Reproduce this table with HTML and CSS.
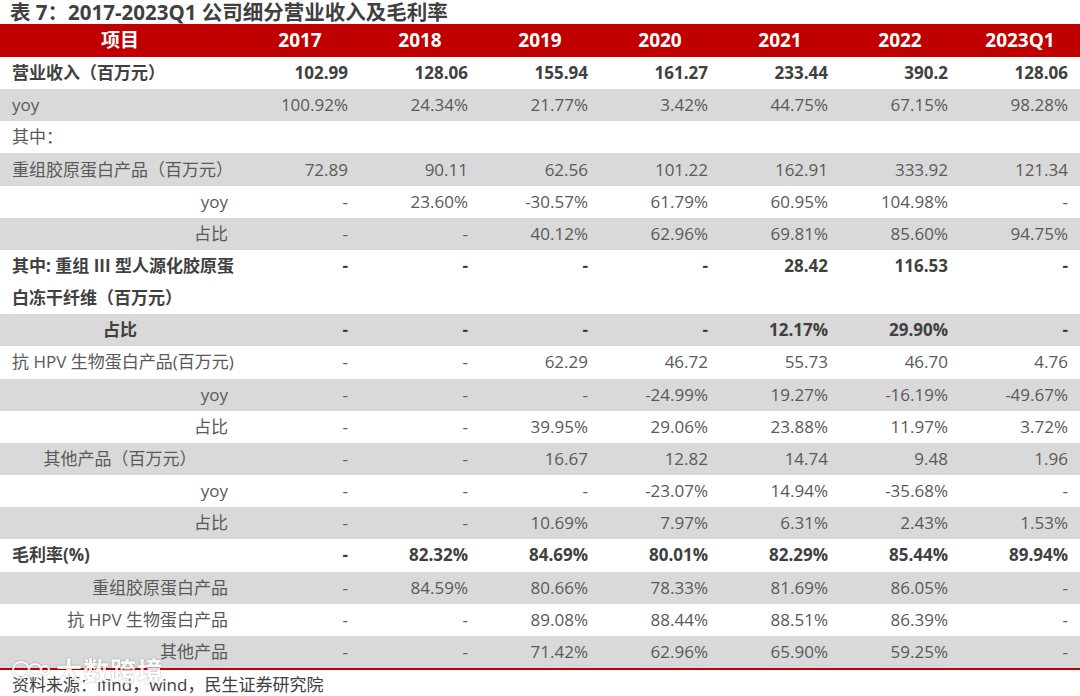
FILE: index.html
```html
<!DOCTYPE html>
<html lang="zh-CN">
<head>
<meta charset="utf-8">
<title>表 7</title>
<link rel="stylesheet" href="styles.css">
</head>
<body>
<div class="page">
  <div class="title">表 7：2017-2023Q1 公司细分营业收入及毛利率</div>
  <div class="t">
    <div class="row head"><div class="cell c">项目</div><div class="cell">2017</div><div class="cell">2018</div><div class="cell">2019</div><div class="cell">2020</div><div class="cell">2021</div><div class="cell">2022</div><div class="cell">2023Q1</div></div>
    <div class="row w b"><div class="cell l">营业收入（百万元）</div><div class="cell">102.99</div><div class="cell">128.06</div><div class="cell">155.94</div><div class="cell">161.27</div><div class="cell">233.44</div><div class="cell">390.2</div><div class="cell">128.06</div></div>
    <div class="row g"><div class="cell l">yoy</div><div class="cell">100.92%</div><div class="cell">24.34%</div><div class="cell">21.77%</div><div class="cell">3.42%</div><div class="cell">44.75%</div><div class="cell">67.15%</div><div class="cell">98.28%</div></div>
    <div class="row w"><div class="cell l">其中：</div><div class="cell"></div><div class="cell"></div><div class="cell"></div><div class="cell"></div><div class="cell"></div><div class="cell"></div><div class="cell"></div></div>
    <div class="row g"><div class="cell l">重组胶原蛋白产品（百万元）</div><div class="cell">72.89</div><div class="cell">90.11</div><div class="cell">62.56</div><div class="cell">101.22</div><div class="cell">162.91</div><div class="cell">333.92</div><div class="cell">121.34</div></div>
    <div class="row w"><div class="cell r">yoy</div><div class="cell">-</div><div class="cell">23.60%</div><div class="cell">-30.57%</div><div class="cell">61.79%</div><div class="cell">60.95%</div><div class="cell">104.98%</div><div class="cell">-</div></div>
    <div class="row g"><div class="cell r">占比</div><div class="cell">-</div><div class="cell">-</div><div class="cell">40.12%</div><div class="cell">62.96%</div><div class="cell">69.81%</div><div class="cell">85.60%</div><div class="cell">94.75%</div></div>
    <div class="row w b"><div class="cell l">其中: 重组 III 型人源化胶原蛋</div><div class="cell">-</div><div class="cell">-</div><div class="cell">-</div><div class="cell">-</div><div class="cell">28.42</div><div class="cell">116.53</div><div class="cell">-</div></div>
    <div class="row w b"><div class="cell l">白冻干纤维（百万元）</div><div class="cell"></div><div class="cell"></div><div class="cell"></div><div class="cell"></div><div class="cell"></div><div class="cell"></div><div class="cell"></div></div>
    <div class="row g b"><div class="cell c">占比</div><div class="cell">-</div><div class="cell">-</div><div class="cell">-</div><div class="cell">-</div><div class="cell">12.17%</div><div class="cell">29.90%</div><div class="cell">-</div></div>
    <div class="row w"><div class="cell l">抗 HPV 生物蛋白产品(百万元)</div><div class="cell">-</div><div class="cell">-</div><div class="cell">62.29</div><div class="cell">46.72</div><div class="cell">55.73</div><div class="cell">46.70</div><div class="cell">4.76</div></div>
    <div class="row g"><div class="cell r">yoy</div><div class="cell">-</div><div class="cell">-</div><div class="cell">-</div><div class="cell">-24.99%</div><div class="cell">19.27%</div><div class="cell">-16.19%</div><div class="cell">-49.67%</div></div>
    <div class="row w"><div class="cell r">占比</div><div class="cell">-</div><div class="cell">-</div><div class="cell">39.95%</div><div class="cell">29.06%</div><div class="cell">23.88%</div><div class="cell">11.97%</div><div class="cell">3.72%</div></div>
    <div class="row g"><div class="cell c">其他产品（百万元）</div><div class="cell">-</div><div class="cell">-</div><div class="cell">16.67</div><div class="cell">12.82</div><div class="cell">14.74</div><div class="cell">9.48</div><div class="cell">1.96</div></div>
    <div class="row w"><div class="cell r">yoy</div><div class="cell">-</div><div class="cell">-</div><div class="cell">-</div><div class="cell">-23.07%</div><div class="cell">14.94%</div><div class="cell">-35.68%</div><div class="cell">-</div></div>
    <div class="row g"><div class="cell r">占比</div><div class="cell">-</div><div class="cell">-</div><div class="cell">10.69%</div><div class="cell">7.97%</div><div class="cell">6.31%</div><div class="cell">2.43%</div><div class="cell">1.53%</div></div>
    <div class="row w b"><div class="cell l">毛利率(%)</div><div class="cell">-</div><div class="cell">82.32%</div><div class="cell">84.69%</div><div class="cell">80.01%</div><div class="cell">82.29%</div><div class="cell">85.44%</div><div class="cell">89.94%</div></div>
    <div class="row g"><div class="cell r">重组胶原蛋白产品</div><div class="cell">-</div><div class="cell">84.59%</div><div class="cell">80.66%</div><div class="cell">78.33%</div><div class="cell">81.69%</div><div class="cell">86.05%</div><div class="cell">-</div></div>
    <div class="row w"><div class="cell r">抗 HPV 生物蛋白产品</div><div class="cell">-</div><div class="cell">-</div><div class="cell">89.08%</div><div class="cell">88.44%</div><div class="cell">88.51%</div><div class="cell">86.39%</div><div class="cell">-</div></div>
    <div class="row g"><div class="cell r">其他产品</div><div class="cell">-</div><div class="cell">-</div><div class="cell">71.42%</div><div class="cell">62.96%</div><div class="cell">65.90%</div><div class="cell">59.25%</div><div class="cell">-</div></div>
  </div>
  <div class="source">资料来源：ifind，wind，民生证券研究院</div>
  <div class="wm">
    <svg class="wm-logo" width="40" height="22" viewBox="0 0 40 22">
      <circle cx="11" cy="11" r="8" fill="none" stroke="#fff" stroke-width="2.2"/>
      <circle cx="25" cy="11" r="6" fill="none" stroke="#fff" stroke-width="2.2"/>
      <circle cx="35" cy="11" r="4" fill="none" stroke="#fff" stroke-width="2.2"/>
    </svg>
    <span class="wm-text">大数跨境</span>
  </div>
</div>
</body>
</html>
```

FILE: styles.css
```css
* { box-sizing: border-box; }
body {
  margin: 0;
  background: #ffffff;
  font-family: "Open Sans", "Noto Sans CJK SC", sans-serif;
  color: #595959;
}
.page {
  position: relative;
  width: 1080px;
  height: 696px;
  overflow: hidden;
}
.title {
  height: 24px;
  line-height: 24px;
  padding-left: 10px;
  font-size: 20.5px;
  font-weight: 700;
  color: #404040;
  white-space: nowrap;
}
.t {
  display: flex;
  flex-direction: column;
  width: 1080px;
  font-size: 17px;
  border-bottom: 2px solid #c00000;
}
.row {
  display: grid;
  grid-template-columns: 240px repeat(7, 120px);
  height: 32.17px;
  align-items: center;
}
.row.head {
  height: 33px;
  background: #c00000;
  color: #ffffff;
  font-size: 19px;
  font-weight: 700;
}
.row.head .cell { text-align: center; padding: 0; line-height: 33px; }
.cell {
  padding: 0 12px;
  line-height: 22px;
  text-align: right;
  white-space: nowrap;
}
.cell.l { text-align: left; }
.cell.c { text-align: center; padding: 0; }
.cell.r { text-align: right; }
.w { background: #ffffff; }
.g { background: #d9d9d9; }
.b { font-weight: 700; color: #404040; }
.source {
  padding: 4px 0 0 12px;
  font-size: 17px;
  line-height: 22px;
  color: #404040;
  white-space: nowrap;
}
.wm {
  position: absolute;
  left: 10px;
  top: 655px;
  display: flex;
  align-items: center;
  gap: 6px;
  opacity: 0.85;
  filter: drop-shadow(0 0 1px rgba(0,0,0,0.35));
}
.wm-text {
  font-family: "Noto Sans CJK SC", sans-serif;
  font-size: 26px;
  font-weight: 700;
  line-height: 30px;
  color: #ffffff;
  letter-spacing: 1px;
}
```
